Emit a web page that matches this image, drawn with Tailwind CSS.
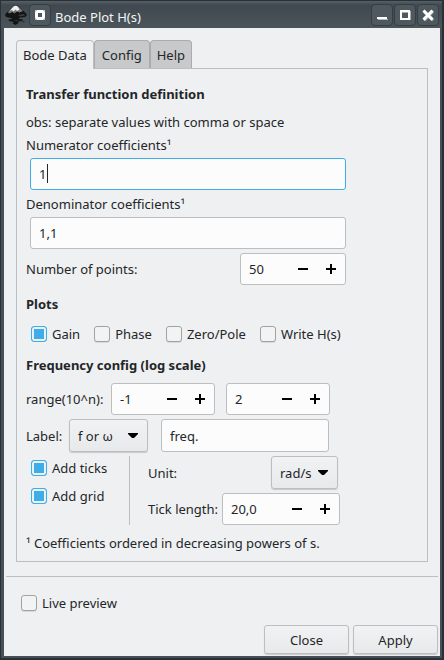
<!DOCTYPE html>
<html lang="en">
<head>
<meta charset="utf-8">
<meta name="viewport" content="width=device-width, initial-scale=1">
<title>Bode Plot H(s)</title>
<script src="https://cdn.jsdelivr.net/npm/@tailwindcss/browser@4"></script>
</head>
<body class="bg-[#475057] font-['Noto_Sans','Open_Sans',sans-serif] text-[13px] leading-5 text-[#232629]">
<svg class="hidden" aria-hidden="true">
  <symbol id="minus" viewBox="0 0 10 10"><path d="M0 4h10v2H0z"/></symbol>
  <symbol id="plus" viewBox="0 0 10 10"><path d="M4 0h2v4h4v2H6v4H4V6H0V4h4z"/></symbol>
  <symbol id="arrow" viewBox="0 0 10 6"><path d="M0 0h10v1L6 5H4L0 1z"/></symbol>
</svg>
<div class="flex min-h-screen flex-col border-t border-r-2 border-b-2 border-l border-[#293036]">
  <header class="flex h-[27px] items-center bg-linear-to-b from-[#566067] via-[#414950] via-15% to-[#4a545b] pr-[3px] pl-1">
    <svg class="mt-px h-[22px] w-[22px]" viewBox="0 0 22 22" aria-hidden="true">
      <path fill="#141414" d="M8.500 2Q11 0 13.500 2L21.500 10Q22.500 12 20 13L15 13.500 13.500 15 18 15.500 17 17 13 17.500 13.500 19 10.500 21 7.500 19.500 9 18 4 17 3.500 15.500 7.500 15 6 14 1.500 13Q-.5 12 .5 10Z"/>
      <path fill="#777" d="M8.500 2.500Q11 .5 13.500 2.500L18 7 14.500 8.500 12 7.500 9.500 9.500 7.500 8 4 9.500 3 8Z"/>
      <path fill="#f0f0f0" d="M8.500 2.500Q11 1 13 3L14.500 5.500 12 7 10.500 5.500 8.500 7.500 7 6 4.500 7Z"/>
      <path fill="#3c3c3c" d="M13 11l6-1 1 1.500-5 1zM9 16l5 .5-3 1z"/>
      <path fill="#20262a" d="M17 17l3 .5-2 1z"/>
    </svg>
    <button type="button" aria-label="Window menu" class="mt-px ml-0.5 flex h-[22px] w-[22px] items-center justify-center rounded-sm border border-[#363e44] bg-[#4e585f]">
      <svg class="h-3 w-3" viewBox="0 0 12 12"><path fill="#c2c6c8" d="M1 1h10v10H1z"/><path fill="#fff" d="M3 1h6v1h1v1h1v6h-1v1H9v1H3v-1H2V9H1V3h1V2h1z"/><path fill="#4e585f" d="M4 4h4v4H4z"/></svg>
    </button>
    <h1 class="mt-1 ml-1 flex-1 text-[#f4f5f5]">Bode Plot H(s)</h1>
    <div class="mt-px flex gap-px">
      <button type="button" aria-label="Minimize" class="flex h-[22px] w-[22px] items-center justify-center rounded-sm border border-[#363e44] bg-[#4e585f]">
        <svg class="h-3 w-3" viewBox="0 0 12 12"><path fill="#fff" d="M1 8h10v2H1z"/><path fill="#b4b8ba" d="M2 10h10v1H2z"/></svg>
      </button>
      <button type="button" aria-label="Maximize" class="flex h-[22px] w-[22px] items-center justify-center rounded-sm border border-[#363e44] bg-[#4e585f]">
        <svg class="h-3 w-3" viewBox="0 0 12 12"><path fill="#fff" fill-rule="evenodd" d="M1 1h10v10H1zM3 3v6h6V3z"/><path fill="#aaa" d="M1 11h11V2h-1v9H1zM3 3h6v1H3z"/></svg>
      </button>
      <button type="button" aria-label="Close window" class="flex h-[22px] w-[22px] items-center justify-center rounded-sm border border-[#363e44] bg-[#4e585f]">
        <svg class="h-3 w-3" viewBox="0 0 12 12"><path stroke="#a8adaf" stroke-width="3" d="M2 2.500l9 9M11 2.500l-9 9"/><path stroke="#fff" stroke-width="3" d="M1.500 1.500l9 9M10.500 1.500l-9 9"/></svg>
      </button>
    </div>
  </header>

  <main class="mr-0.5 mb-0.5 ml-[3px] flex flex-1 flex-col bg-[#eff0f1] px-0.5 pt-3 pb-0.5">
    <div class="px-2.5">
      <div role="tablist" class="flex">
        <button type="button" role="tab" aria-selected="true" class="z-10 -mb-px h-[29px] rounded-t-sm border border-b-0 border-[#bcbebf] bg-[#eff0f1] px-1.5">Bode Data</button>
        <button type="button" role="tab" aria-selected="false" class="h-7 rounded-t-sm border border-b-0 border-[#a9abac] bg-[#c8c9ca] px-[7px]">Config</button>
        <button type="button" role="tab" aria-selected="false" class="h-7 rounded-t-sm border border-b-0 border-[#a9abac] bg-[#c8c9ca] px-1.5">Help</button>
      </div>
      <section role="tabpanel" class="border border-[#bcbebf] px-[9px] pt-[15px] pb-2">
        <h2 class="font-bold">Transfer function definition</h2>
        <p class="mt-2">obs: separate values with comma or space</p>
        <label for="num" class="mt-[3px] block">Numerator coefficients¹</label>
        <div class="relative mt-[3px] mr-[72px] ml-1">
          <input id="num" type="text" value="1" autofocus class="block h-8 w-full rounded-[3px] border border-[#3daee9] bg-[#fcfcfc] px-2 caret-transparent outline-none">
          <span aria-hidden="true" class="pointer-events-none absolute top-1.5 left-[17px] h-[19px] w-px bg-[#232629]"></span>
        </div>
        <label for="den" class="mt-1 block">Denominator coefficients¹</label>
        <div class="mt-[3px] mr-[72px] ml-1">
          <input id="den" type="text" value="1,1" class="block h-8 w-full rounded-[3px] border border-[#bcbebf] bg-[#fcfcfc] px-2 outline-none">
        </div>
        <div class="mt-1 mr-[72px] flex items-center justify-between">
          <label for="points">Number of points:</label>
          <div class="flex h-8 w-[106px] rounded-[3px] border border-[#bcbebf] bg-[#fcfcfc]">
            <input id="points" type="text" role="spinbutton" aria-valuenow="50" value="50" class="min-w-0 flex-1 pl-2 outline-none">
            <button type="button" aria-label="Decrease" class="flex w-7 items-center justify-center"><svg class="h-2.5 w-2.5"><use href="#minus"/></svg></button>
            <button type="button" aria-label="Increase" class="flex w-7 items-center justify-center"><svg class="h-2.5 w-2.5"><use href="#plus"/></svg></button>
          </div>
        </div>

        <h2 class="mt-[9px] font-bold">Plots</h2>
        <div class="mt-2.5 ml-[5px] flex gap-3.5">
          <label class="flex items-center gap-[5px]"><input type="checkbox" checked class="h-4 w-4 appearance-none rounded-[3px] border border-[#a0a2a4] bg-[#f2f3f3] shadow-[0_1px_0_#d8d9da] checked:border-[#3daee9] checked:bg-[#3daee9] checked:shadow-[inset_0_0_0_2px_#eff0f1]">Gain</label>
          <label class="flex items-center gap-[5px]"><input type="checkbox" class="h-4 w-4 appearance-none rounded-[3px] border border-[#a0a2a4] bg-[#f2f3f3] shadow-[0_1px_0_#d8d9da] checked:border-[#3daee9] checked:bg-[#3daee9]">Phase</label>
          <label class="flex items-center gap-[5px]"><input type="checkbox" class="h-4 w-4 appearance-none rounded-[3px] border border-[#a0a2a4] bg-[#f2f3f3] shadow-[0_1px_0_#d8d9da] checked:border-[#3daee9] checked:bg-[#3daee9]">Zero/Pole</label>
          <label class="flex items-center gap-[5px]"><input type="checkbox" class="h-4 w-4 appearance-none rounded-[3px] border border-[#a0a2a4] bg-[#f2f3f3] shadow-[0_1px_0_#d8d9da] checked:border-[#3daee9] checked:bg-[#3daee9]">Write H(s)</label>
        </div>

        <h2 class="mt-[11px] font-bold">Frequency config (log scale)</h2>
        <div class="mt-2 flex items-center">
          <label for="from" class="w-[85px]">range(10^n):</label>
          <div class="flex h-8 w-[104px] rounded-[3px] border border-[#bcbebf] bg-[#fcfcfc]">
            <input id="from" type="text" role="spinbutton" aria-valuenow="-1" value="-1" class="min-w-0 flex-1 pl-2 outline-none">
            <button type="button" aria-label="Decrease" class="flex w-7 items-center justify-center"><svg class="h-2.5 w-2.5"><use href="#minus"/></svg></button>
            <button type="button" aria-label="Increase" class="flex w-7 items-center justify-center"><svg class="h-2.5 w-2.5"><use href="#plus"/></svg></button>
          </div>
          <div class="ml-[11px] flex h-8 w-[104px] rounded-[3px] border border-[#bcbebf] bg-[#fcfcfc]">
            <input aria-label="Range end" type="text" role="spinbutton" aria-valuenow="2" value="2" class="min-w-0 flex-1 pl-2 outline-none">
            <button type="button" aria-label="Decrease" class="flex w-7 items-center justify-center"><svg class="h-2.5 w-2.5"><use href="#minus"/></svg></button>
            <button type="button" aria-label="Increase" class="flex w-7 items-center justify-center"><svg class="h-2.5 w-2.5"><use href="#plus"/></svg></button>
          </div>
        </div>
        <div class="mt-1 mr-[89px] flex items-center">
          <label for="label" class="w-[43px]">Label:</label>
          <div class="relative w-[79px]">
            <select id="label" class="block h-[33px] w-full appearance-none rounded-[3px] border border-[#bcbebf] bg-linear-to-b from-[#f1f2f3] to-[#e8e9ea] pl-2 shadow-[0_1px_1px_#c8c9ca]"><option>f or ω</option></select>
            <svg class="pointer-events-none absolute top-3.5 right-2.5 h-1.5 w-2.5"><use href="#arrow"/></svg>
          </div>
          <input aria-label="Label text" type="text" value="freq." class="ml-[13px] h-[33px] min-w-0 flex-1 rounded-[3px] border border-[#bcbebf] bg-[#fcfcfc] px-2 outline-none">
        </div>

        <div class="mt-1 flex">
          <div class="flex w-[103px] flex-col gap-2 pt-0.5 pl-[5px]">
            <label class="flex items-center gap-[5px]"><input type="checkbox" checked class="h-4 w-4 appearance-none rounded-[3px] border border-[#a0a2a4] bg-[#f2f3f3] checked:border-[#3daee9] checked:bg-[#3daee9] checked:shadow-[inset_0_0_0_2px_#eff0f1]">Add ticks</label>
            <label class="flex items-center gap-[5px]"><input type="checkbox" checked class="h-4 w-4 appearance-none rounded-[3px] border border-[#a0a2a4] bg-[#f2f3f3] checked:border-[#3daee9] checked:bg-[#3daee9] checked:shadow-[inset_0_0_0_2px_#eff0f1]">Add grid</label>
          </div>
          <div class="flex flex-col gap-1 border-l border-[#bcbebf] pl-[18px]">
            <div class="flex items-center justify-between pr-0.5">
              <label for="unit">Unit:</label>
              <div class="relative w-[67px]">
                <select id="unit" class="block h-[33px] w-full appearance-none rounded-[3px] border border-[#bcbebf] bg-linear-to-b from-[#f1f2f3] to-[#e8e9ea] pl-2 shadow-[0_1px_1px_#c8c9ca]"><option>rad/s</option></select>
                <svg class="pointer-events-none absolute top-3.5 right-2.5 h-1.5 w-2.5"><use href="#arrow"/></svg>
              </div>
            </div>
            <div class="flex items-center">
              <label for="tick" class="w-[74px] whitespace-nowrap">Tick length:</label>
              <div class="flex h-8 w-[118px] rounded-[3px] border border-[#bcbebf] bg-[#fcfcfc]">
                <input id="tick" type="text" role="spinbutton" aria-valuenow="20" value="20,0" class="min-w-0 flex-1 pl-2 outline-none">
                <button type="button" aria-label="Decrease" class="flex w-7 items-center justify-center"><svg class="h-2.5 w-2.5"><use href="#minus"/></svg></button>
                <button type="button" aria-label="Increase" class="flex w-7 items-center justify-center"><svg class="h-2.5 w-2.5"><use href="#plus"/></svg></button>
              </div>
            </div>
          </div>
        </div>
        <p class="mt-2">¹ Coefficients ordered in decreasing powers of s.</p>
      </section>
    </div>

    <hr class="mt-3.5 border-[#bcbebf]">
    <label class="mt-4 flex items-center gap-[5px] self-start pl-[15px]"><input type="checkbox" class="h-4 w-4 appearance-none rounded-[3px] border border-[#a0a2a4] bg-[#f2f3f3] shadow-[0_1px_0_#d8d9da] checked:border-[#3daee9] checked:bg-[#3daee9]">Live preview</label>
    <div class="mt-auto flex justify-end gap-1">
      <button type="button" class="h-[29px] w-[85px] rounded-[3px] border border-[#bcbebf] bg-linear-to-b from-[#f1f2f3] to-[#e8e9ea] shadow-[0_1px_1px_#c8c9ca]">Close</button>
      <button type="button" class="h-[29px] w-[85px] rounded-[3px] border border-[#bcbebf] bg-linear-to-b from-[#f1f2f3] to-[#e8e9ea] shadow-[0_1px_1px_#c8c9ca]">Apply</button>
    </div>
  </main>
</div>
</body>
</html>
